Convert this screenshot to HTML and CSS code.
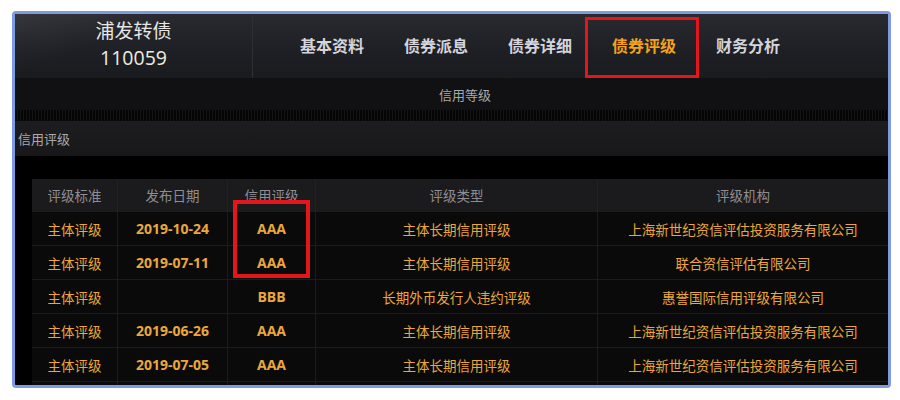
FILE: index.html
```html
<!DOCTYPE html>
<html lang="zh-CN">
<head>
<meta charset="utf-8">
<title>浦发转债 债券评级</title>
<link rel="stylesheet" href="styles.css">
</head>
<body>
<div class="frame">
  <div class="header">
    <div class="title">
      <div class="name">浦发转债</div>
      <div class="code">110059</div>
    </div>
    <div class="nav">
      <div class="nav-item">基本资料</div>
      <div class="nav-item">债券派息</div>
      <div class="nav-item">债券详细</div>
      <div class="nav-item active">债券评级</div>
      <div class="nav-item">财务分析</div>
    </div>
  </div>
  <div class="subbar">信用等级</div>
  <div class="stripe"></div>
  <div class="section">信用评级</div>
  <div class="gap"></div>
  <div class="table-wrap">
    <div class="table">
      <div class="row head">
        <div class="c c1">评级标准</div>
        <div class="c c2">发布日期</div>
        <div class="c c3">信用评级</div>
        <div class="c c4">评级类型</div>
        <div class="c c5">评级机构</div>
      </div>
      <div class="row">
        <div class="c c1">主体评级</div>
        <div class="c c2 num">2019-10-24</div>
        <div class="c c3 num">AAA</div>
        <div class="c c4">主体长期信用评级</div>
        <div class="c c5">上海新世纪资信评估投资服务有限公司</div>
      </div>
      <div class="row">
        <div class="c c1">主体评级</div>
        <div class="c c2 num">2019-07-11</div>
        <div class="c c3 num">AAA</div>
        <div class="c c4">主体长期信用评级</div>
        <div class="c c5">联合资信评估有限公司</div>
      </div>
      <div class="row">
        <div class="c c1">主体评级</div>
        <div class="c c2 num"></div>
        <div class="c c3 num">BBB</div>
        <div class="c c4">长期外币发行人违约评级</div>
        <div class="c c5">惠誉国际信用评级有限公司</div>
      </div>
      <div class="row">
        <div class="c c1">主体评级</div>
        <div class="c c2 num">2019-06-26</div>
        <div class="c c3 num">AAA</div>
        <div class="c c4">主体长期信用评级</div>
        <div class="c c5">上海新世纪资信评估投资服务有限公司</div>
      </div>
      <div class="row">
        <div class="c c1">主体评级</div>
        <div class="c c2 num">2019-07-05</div>
        <div class="c c3 num">AAA</div>
        <div class="c c4">主体长期信用评级</div>
        <div class="c c5">上海新世纪资信评估投资服务有限公司</div>
      </div>
      <div class="row">
        <div class="c c1"></div>
        <div class="c c2"></div>
        <div class="c c3"></div>
        <div class="c c4"></div>
        <div class="c c5"></div>
      </div>
    </div>
    <div class="mark"></div>
  </div>
</div>
</body>
</html>
```

FILE: styles.css
```css
* { box-sizing: border-box; }
html, body { margin: 0; padding: 0; background: #ffffff; }
body {
  font-family: "Noto Sans CJK SC", "Noto Sans", sans-serif;
  width: 900px;
  height: 400px;
  overflow: hidden;
}
.frame {
  margin: 11px 0 0 12px;
  width: 879px;
  height: 377px;
  border: 3px solid #7e9be0;
  border-radius: 4px;
  background: #000;
  overflow: hidden;
  display: flex;
  flex-direction: column;
}
.header {
  height: 64px;
  flex: none;
  display: flex;
  background: linear-gradient(180deg, #292a30 0%, #1f2025 55%, #1a1b1f 100%);
}
.title {
  width: 238px;
  flex: none;
  border-right: 1px solid #2e2f35;
  background: linear-gradient(160deg, rgba(255,255,255,0.06) 0%, rgba(255,255,255,0) 40%);
  display: flex;
  flex-direction: column;
  align-items: center;
  justify-content: flex-start;
  color: #e6e6e6;
  padding-top: 2px;
}
.title .name {
  font-size: 19px;
  line-height: 28px;
  height: 28px;
}
.title .code {
  font-family: "Open Sans", "Liberation Sans", sans-serif;
  font-size: 19.5px;
  line-height: 27px;
  height: 27px;
  color: #ecece0;
}
.nav {
  display: flex;
  padding-left: 27px;
  align-items: stretch;
}
.nav-item {
  width: 104px;
  display: flex;
  align-items: center;
  justify-content: center;
  font-size: 16px;
  font-weight: bold;
  color: #d4d4dc;
  position: relative;
  padding-bottom: 2px;
}
.nav-item.active { color: #f4a21c; }
.nav-item.active::after {
  content: "";
  position: absolute;
  left: -7px;
  right: -3px;
  top: 3px;
  bottom: 0;
  border: 3px solid #e3161b;
}
.subbar {
  height: 32px;
  flex: none;
  background: #111113;
  color: #a8a8ac;
  font-size: 13px;
  display: flex;
  align-items: center;
  justify-content: center;
  padding-left: 27px;
}
.stripe {
  height: 11px;
  flex: none;
  background: repeating-linear-gradient(90deg, #050505 0px, #050505 2px, #141414 2px, #141414 3px);
}
.section {
  height: 35px;
  flex: none;
  background: linear-gradient(180deg, #1d1d20 0%, #18181a 100%);
  color: #a8a8ac;
  font-size: 13px;
  display: flex;
  align-items: center;
  padding-left: 3px;
}
.gap { height: 23px; flex: none; background: #000; }
.table-wrap {
  position: relative;
  padding-left: 17px;
  flex: 1;
  overflow: hidden;
}
.table { width: 856px; }
.row {
  display: flex;
  height: 34px;
  background: #0a0a0b;
  border-top: 1px solid #1c1c1f;
}
.row.head {
  height: 32px;
  border-top: none;
  background: #1b1b1e;
}
.c {
  display: flex;
  align-items: center;
  justify-content: center;
  font-size: 13.5px;
  color: #eaa83a;
  border-right: 1px solid #1c1c1f;
  white-space: nowrap;
}
.head .c { color: #8e8e92; font-size: 13.5px; border-right-color: #222226; }
.c1 { width: 86px; }
.c2 { width: 110px; }
.c3 { width: 88px; }
.c4 { width: 282px; }
.c5 { width: 290px; border-right: none; }
.num {
  font-family: "Open Sans", "Liberation Sans", sans-serif;
  font-weight: bold;
  font-size: 14px;
}
.mark {
  position: absolute;
  left: 218px;
  top: 21px;
  width: 77px;
  height: 78px;
  border: 4px solid #e3161b;
}
```
